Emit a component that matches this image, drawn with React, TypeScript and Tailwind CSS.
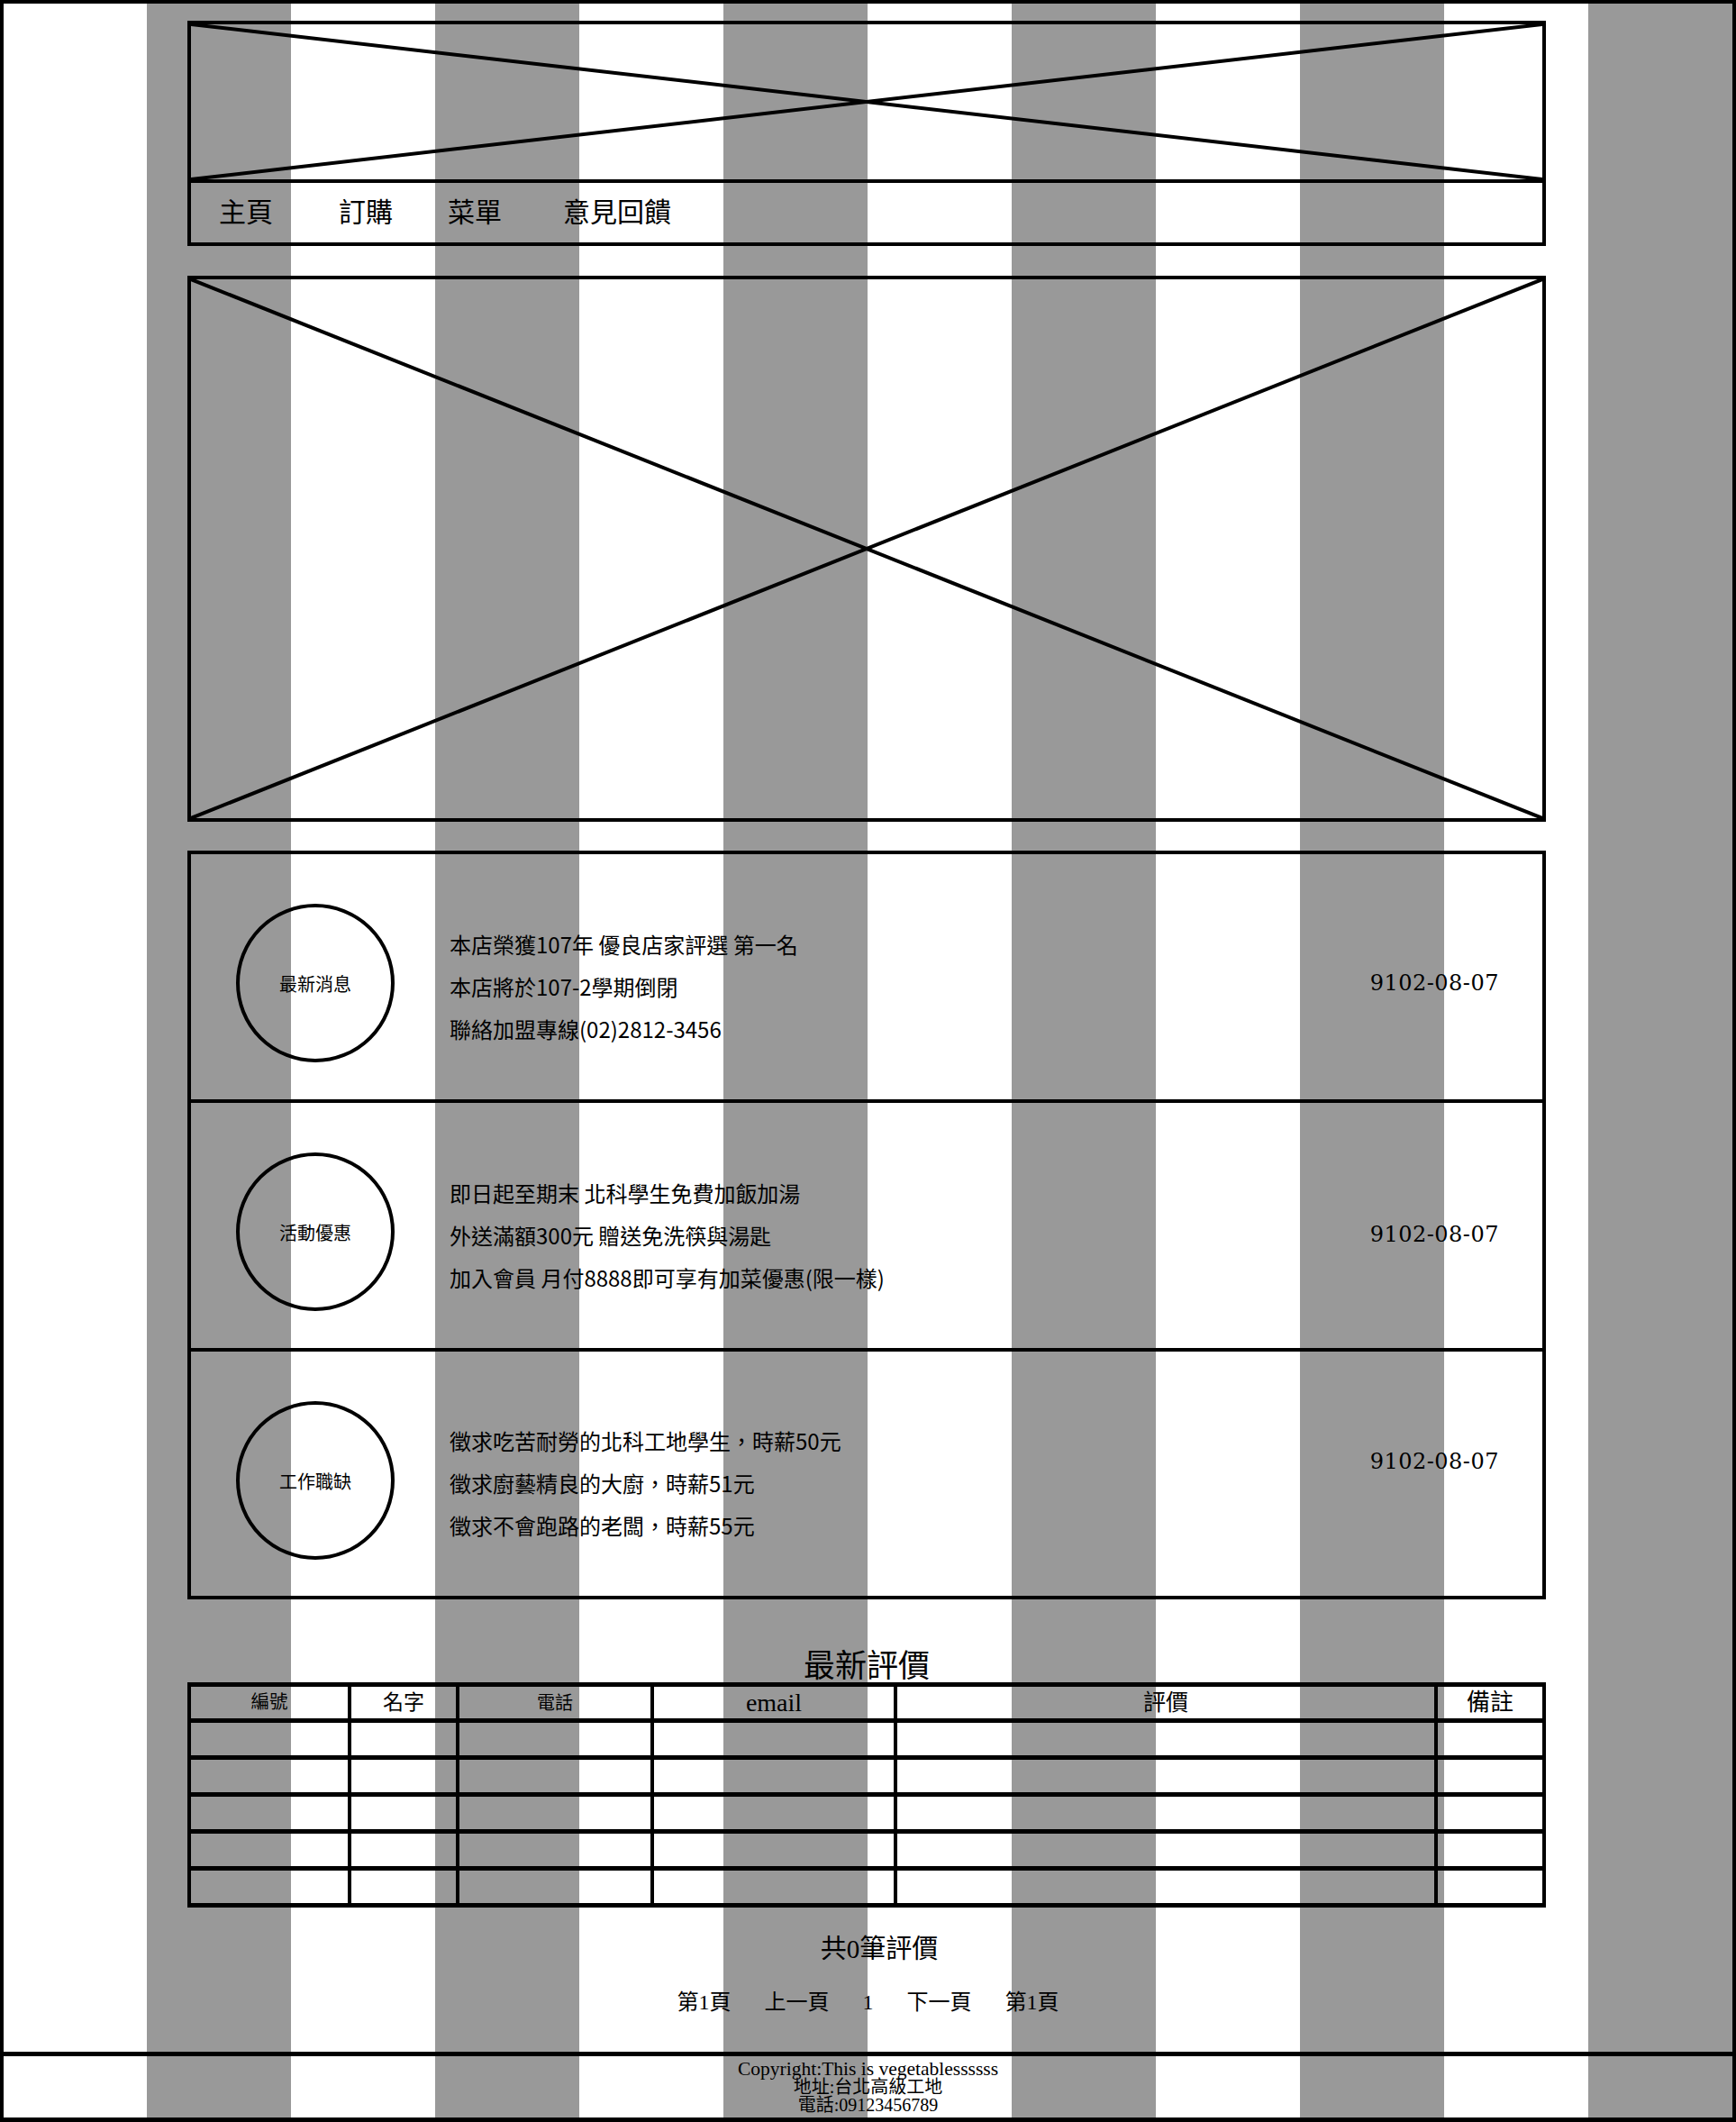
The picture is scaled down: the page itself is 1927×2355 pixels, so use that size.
const navItems = [
  { label: "主頁", cls: "ml-[31px]" },
  { label: "訂購", cls: "ml-[73px]" },
  { label: "菜單", cls: "ml-[61px]" },
  { label: "意見回饋", cls: "ml-[68px]" },
];

const news = [
  {
    label: "最新消息",
    rowCls: "h-[272px]",
    dateCls: "",
    lines: ["本店榮獲107年 優良店家評選 第一名", "本店將於107-2學期倒閉", "聯絡加盟專線(02)2812-3456"],
  },
  {
    label: "活動優惠",
    rowCls: "h-[276px] border-t-4 border-black",
    dateCls: "mt-[6px]",
    lines: ["即日起至期末 北科學生免費加飯加湯", "外送滿額300元 贈送免洗筷與湯匙", "加入會員 月付8888即可享有加菜優惠(限一樣)"],
  },
  {
    label: "工作職缺",
    rowCls: "h-[275px] border-t-4 border-black",
    dateCls: "mb-[40px]",
    lines: ["徵求吃苦耐勞的北科工地學生，時薪50元", "徵求廚藝精良的大廚，時薪51元", "徵求不會跑路的老闆，時薪55元"],
  },
];

const cols = [
  { w: "w-[178px] border-r-4", head: "編號", font: "text-[20.5px]" },
  { w: "w-[120px] border-r-4", head: "名字", font: "text-[23px]" },
  { w: "w-[216px] border-r-4", head: "電話", font: "text-[20px]" },
  { w: "w-[270px] border-r-4", head: "email", font: "text-[28px]" },
  { w: "w-[600px] border-r-4", head: "評價", font: "text-[25px]" },
  { w: "w-[116px]", head: "備註", font: "text-[26px]" },
];

// placeholder image: box with a cross
function Cross() {
  return (
    <svg className="block w-full h-full">
      <line x1="0" y1="0" x2="100%" y2="100%" stroke="#000" strokeWidth={4} />
      <line x1="0" y1="100%" x2="100%" y2="0" stroke="#000" strokeWidth={4} />
    </svg>
  );
}

export default function App() {
  return (
    <div className="w-[1927px] h-[2355px] flex flex-col border-x-4 border-t-4 border-b-[5px] border-black bg-origin-border bg-[image:repeating-linear-gradient(90deg,#fff_3px_163px,#999_163px_323px)] text-black font-['Liberation_Serif','Noto_Sans_CJK_TC',serif]">
      <main className="flex-1 w-[1508px] ml-[204px] pt-[19px]">
        {/* header */}
        <div className="border-4 border-black">
          <div className="h-[172px]">
            <Cross />
          </div>
          <nav className="h-[70px] border-t-4 border-black flex items-center pb-[6px] text-[30px] leading-none font-['Noto_Sans_CJK_TC',sans-serif]">
            {navItems.map((n) => (
              <span key={n.label} className={n.cls}>
                {n.label}
              </span>
            ))}
          </nav>
        </div>

        {/* banner */}
        <div className="mt-[33px] h-[606px] border-4 border-black">
          <Cross />
        </div>

        {/* news */}
        <div className="mt-[32px] border-4 border-black">
          {news.map((row) => (
            <div key={row.label} className={`flex items-center pt-[14px] ${row.rowCls}`}>
              <div className="ml-[50px] w-[176px] h-[176px] shrink-0 rounded-full border-4 border-black flex items-center justify-center pt-[2px] text-[20px] font-['Noto_Sans_CJK_TC',sans-serif]">
                {row.label}
              </div>
              <div className="ml-[61px] flex-1 pt-[6px] text-[24px] leading-[47px] font-['Noto_Sans_CJK_TC',sans-serif]">
                {row.lines.map((l) => (
                  <div key={l}>{l}</div>
                ))}
              </div>
              <div className={`mr-[48px] text-[24px] leading-[47px] tracking-[0.5px] font-['DejaVu_Serif',serif] ${row.dateCls}`}>
                9102-08-07
              </div>
            </div>
          ))}
        </div>

        {/* reviews */}
        <h2 className="mt-[57px] h-[35px] text-center text-[35px] leading-[35px] font-normal">最新評價</h2>
        <div className="border-x-4 border-y-[5px] border-black">
          <div className="flex h-[40px] border-b-[5px] border-black">
            {cols.map((c) => (
              <div key={c.head} className={`${c.w} border-black flex items-center justify-center leading-none ${c.font}`}>
                {c.head}
              </div>
            ))}
          </div>
          {[0, 1, 2, 3, 4].map((r) => (
            <div key={r} className={`flex ${r < 4 ? "h-[41px] border-b-[5px]" : "h-[36px]"} border-black`}>
              {cols.map((c) => (
                <div key={c.head} className={`${c.w} border-black`} />
              ))}
            </div>
          ))}
        </div>

        <p className="mt-[32px] h-[29px] pl-[28px] text-center text-[29px] leading-[29px]">共0筆評價</p>
        <div className="mt-[32px] h-[24px] flex justify-center gap-[37px] pl-[3px] text-[24px] leading-[24px]">
          <span>第1頁</span>
          <span>上一頁</span>
          <span>1</span>
          <span>下一頁</span>
          <span>第1頁</span>
        </div>
      </main>

      <footer className="h-[73px] border-t-[5px] border-black pt-[4px] text-center text-[20px] leading-[20px]">
        <div className="text-[21.5px]">Copyright:This is vegetablessssss</div>
        <div>地址:台北高級工地</div>
        <div>電話:09123456789</div>
      </footer>
    </div>
  );
}
